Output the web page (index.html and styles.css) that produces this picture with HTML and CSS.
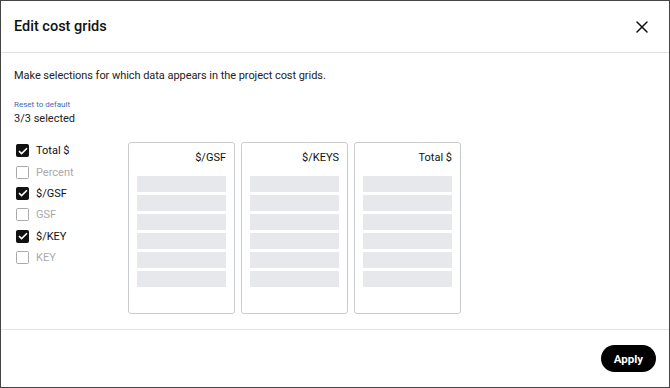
FILE: index.html
```html
<!DOCTYPE html>
<html>
<head>
<meta charset="utf-8">
<link rel="stylesheet" href="styles.css">
</head>
<body>
<div class="modal">
  <header class="modal-header">
    <h1 class="title">Edit cost grids</h1>
    <button class="close" aria-label="Close">
      <svg width="12" height="12" viewBox="0 0 12 12"><path d="M1 1L11 11M11 1L1 11" stroke="#111" stroke-width="1.5" stroke-linecap="round"/></svg>
    </button>
  </header>
  <section class="modal-body">
    <p class="intro">Make selections for which data appears in the project cost grids.</p>
    <a class="reset">Reset to default</a>
    <div class="count">3/3 selected</div>
    <div class="main">
      <ul class="options">
        <li class="opt on"><span class="box"><svg width="10" height="8" viewBox="0 0 10 8"><path d="M1 4.2L3.6 6.6L9 1.2" fill="none" stroke="#fff" stroke-width="1.6"/></svg></span>Total $</li>
        <li class="opt"><span class="box"></span>Percent</li>
        <li class="opt on"><span class="box"><svg width="10" height="8" viewBox="0 0 10 8"><path d="M1 4.2L3.6 6.6L9 1.2" fill="none" stroke="#fff" stroke-width="1.6"/></svg></span>$/GSF</li>
        <li class="opt"><span class="box"></span>GSF</li>
        <li class="opt on"><span class="box"><svg width="10" height="8" viewBox="0 0 10 8"><path d="M1 4.2L3.6 6.6L9 1.2" fill="none" stroke="#fff" stroke-width="1.6"/></svg></span>$/KEY</li>
        <li class="opt"><span class="box"></span>KEY</li>
      </ul>
      <div class="cards">
        <div class="card"><div class="card-title">$/GSF</div><div class="bars"><i></i><i></i><i></i><i></i><i></i><i></i></div></div>
        <div class="card"><div class="card-title">$/KEYS</div><div class="bars"><i></i><i></i><i></i><i></i><i></i><i></i></div></div>
        <div class="card"><div class="card-title">Total $</div><div class="bars"><i></i><i></i><i></i><i></i><i></i><i></i></div></div>
      </div>
    </div>
  </section>
  <footer class="modal-footer">
    <button class="apply">Apply</button>
  </footer>
</div>
</body>
</html>
```
FILE: styles.css
```css
* { box-sizing: border-box; }
html, body { margin: 0; padding: 0; background: #fff; }
body { font-family: Roboto, "Noto Sans", sans-serif; color: #111; }
.modal {
  width: 670px; height: 388px;
  border: 1px solid #444;
  display: flex; flex-direction: column;
}
.modal-header {
  height: 52px;
  border-bottom: 1px solid #e2e2e2;
  display: flex; align-items: center; justify-content: space-between;
  padding: 0 21px 0 13px;
  flex: none;
}
.title { margin: 0; font-size: 14.5px; font-weight: 500; }
.close { border: 0; background: none; padding: 0; width: 12px; height: 12px; display: flex; }
.modal-body { flex: 1; padding: 15px 13px 0; border-bottom: 1px solid #e2e2e2; }
.intro { margin: 0; font-size: 11px; line-height: 16px; letter-spacing: -0.05px; color: #222; }
.reset { display: block; margin-top: 16px; font-size: 8px; line-height: 10px; color: #3d6db5; }
.count { font-size: 11px; line-height: 16px; margin-top: 1px; color: #222; }
.main { display: flex; margin-top: 15px; }
.options { list-style: none; margin: 0; padding: 0; width: 114px; }
.opt { display: flex; align-items: center; height: 21.4px; font-size: 11px; color: #aaa; }
.opt.on { color: #111; }
.opt:first-child { margin-top: -2px; }
.box {
  width: 13px; height: 13px; margin: 0 7px 0 2px;
  border: 1px solid #aaa; border-radius: 1.5px;
  display: flex; align-items: center; justify-content: center;
}
.opt.on .box { background: #111; border-color: #111; }
.cards { display: flex; gap: 6px; }
.card {
  width: 107px; height: 172px;
  border: 1px solid #c9cccf; border-radius: 3px;
  padding: 8px 8px 0;
}
.card-title { text-align: right; font-size: 11px; line-height: 14px; color: #111; }
.bars { display: flex; flex-direction: column; gap: 3px; margin-top: 11px; }
.bars i { display: block; height: 16px; background: #e6e8ec; }
.modal-footer { height: 57px; flex: none; display: flex; align-items: center; justify-content: flex-end; padding: 0 13px 0 0; }
.apply {
  background: #000; color: #fff; border: 0;
  border-radius: 14px; width: 55px; height: 27px;
  font-family: Roboto, sans-serif; font-weight: 700; font-size: 11.5px;
}
```
